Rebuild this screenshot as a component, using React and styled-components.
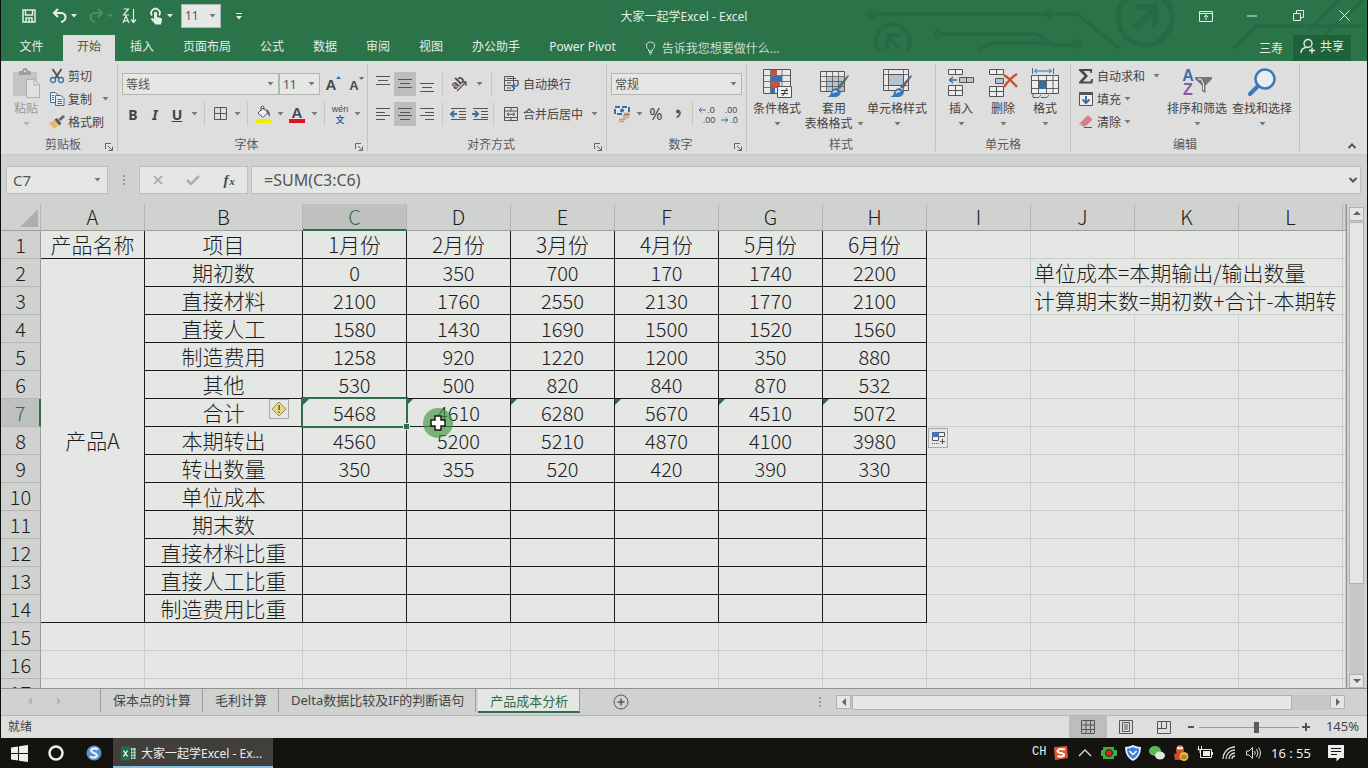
import React from 'react';
import styled, { createGlobalStyle, css } from 'styled-components';

const c = {
  green: '#2b7349',
  greenDark: '#1f6138',
  accent: '#2f6d4c',
  ribbon: '#dedede',
  strip: '#d0d2d0',
  paper: '#e5e7e4',
  line: '#b4b6b4',
  grid: '#cbcdcb',
  ink: '#444',
  blue: '#3f6f9f',
};

const GlobalStyle = createGlobalStyle`
  * { box-sizing: border-box; }
  body { margin: 0; background: #111; }
  body, button, input, select, table {
    font-family: "Noto Sans", "Noto Sans CJK SC", sans-serif;
    font-size: 12px;
    color: ${c.ink};
  }
  button, input, select {
    border: 0; padding: 0; margin: 0; background: none; outline: none; border-radius: 0;
  }
  svg { display: block; flex: none; overflow: visible; }
`;

const Window = styled.div`
  height: 100vh;
  display: flex;
  flex-direction: column;
  overflow: hidden;
`;

const Frame = styled.div`
  flex: 1;
  min-height: 0;
  display: flex;
  flex-direction: column;
  border: solid #0c0c0c;
  border-width: 0 1px;
`;

/* ---------- title bar and ribbon tabs ---------- */

const Header = styled.header`
  position: relative;
  background: ${c.green};
  color: #e3efe6;
`;

const Circuit = styled.svg`
  position: absolute;
  right: 0;
  top: 0;
  overflow: hidden;
`;

const TitleBar = styled.div`
  position: relative;
  display: grid;
  grid-template-columns: 1fr auto 1fr;
  align-items: center;
  height: 31px;
`;

const QuickTools = styled.div`
  display: flex;
  align-items: center;
  padding-left: 16px;
`;

const QuickButton = styled.button`
  width: ${(p) => p.$w || 24}px;
  height: 24px;
  display: flex;
  align-items: center;
  justify-content: center;
  opacity: ${(p) => (p.$dim ? 0.2 : 1)};
`;

const Title = styled.div`
  color: #e3efe6;
`;

const WindowButtons = styled.div`
  display: flex;
  justify-content: flex-end;
`;

const WindowButton = styled.button`
  width: 46px;
  height: 30px;
  display: flex;
  align-items: center;
  justify-content: center;
`;

const TabBar = styled.nav`
  position: relative;
  display: flex;
  align-items: flex-end;
  gap: 1px;
  height: 30px;
`;

const Tab = styled.button`
  height: 26px;
  padding: 0 14px 4px;
  color: ${(p) => (p.$active ? c.accent : '#e3efe6')};
  background: ${(p) => (p.$active ? c.ribbon : 'transparent')};
  ${(p) => p.$file && css`width: 61px;`}
`;

const TellMe = styled.label`
  display: flex;
  align-items: center;
  gap: 6px;
  height: 26px;
  padding: 0 14px;
  input { width: 130px; color: #c9decf; }
  input::placeholder { color: #c9decf; opacity: 1; }
`;

const Account = styled.div`
  margin-left: auto;
  height: 26px;
  display: flex;
  align-items: center;
  gap: 10px;
  padding-right: 16px;
`;

const AccountButton = styled.button`
  color: #e3efe6;
  height: 26px;
`;

const ShareButton = styled.button`
  display: flex;
  align-items: center;
  gap: 4px;
  height: 26px;
  padding: 0 7px 4px;
  color: #e3efe6;
  background: ${c.greenDark};
`;

/* ---------- ribbon ---------- */

const Ribbon = styled.div`
  position: relative;
  display: flex;
  height: 94px;
  padding: 3px 0;
  background: ${c.ribbon};
  border-bottom: 1px solid #c6c8c6;
`;

const Group = styled.section`
  width: ${(p) => p.$w}px;
  display: flex;
  flex-direction: column;
  border-right: 1px solid #c2c4c2;
`;

const GroupBody = styled.div`
  flex: 1;
  min-height: 0;
  display: flex;
  padding-left: ${(p) => p.$pad || 4}px;
`;

const GroupFoot = styled.div`
  display: flex;
  align-items: center;
  height: 15px;
  padding: 0 4px 0 20px;
  color: #5a5a5a;
  span { flex: 1; text-align: center; }
  svg { align-self: flex-end; }
`;

const FootSpacer = styled.i`
  width: 16px;
`;

const Rows = styled.div`
  display: flex;
  flex-direction: column;
  gap: 8px;
  padding-top: 9px;
`;

const Row = styled.div`
  display: flex;
  align-items: center;
  height: 22px;
`;

const Tool = styled.button`
  display: flex;
  align-items: center;
  justify-content: center;
  gap: 4px;
  width: ${(p) => (p.$w ? p.$w + 'px' : '22px')};
  height: ${(p) => (p.$on ? 24 : 22)}px;
  font-size: ${(p) => p.$size || 12}px;
  background: ${(p) => (p.$on ? '#bdbdbd' : 'transparent')};
`;

const WideTool = styled(Tool)`
  width: auto;
  padding: 0 0 0 7px;
  white-space: nowrap;
`;

const Divider = styled.i`
  width: 1px;
  height: 24px;
  margin: 0 ${(p) => p.$m || 4}px;
  background: #c6c8c6;
`;

const Drop = styled.span`
  position: relative;
  display: flex;
  align-items: center;
  width: ${(p) => p.$w}px;
  height: ${(p) => p.$h || 22}px;
  margin-left: ${(p) => p.$ml || 0}px;
  background: ${c.paper};
  border: 1px solid ${c.line};
  select {
    appearance: none;
    width: 100%;
    height: 100%;
    padding-left: 3px;
    font-size: 12px;
    color: #555;
  }
  svg { position: absolute; right: 4px; pointer-events: none; }
`;

const BigTool = styled.button`
  display: flex;
  flex-direction: column;
  align-items: center;
  flex: none;
  width: ${(p) => p.$w}px;
  padding-top: 4px;
  opacity: ${(p) => (p.$dim ? 0.45 : 1)};
  line-height: 16px;
  white-space: nowrap;
  > svg:first-child { margin-bottom: 3px; }
`;

const CaretLine = styled.span`
  display: flex;
  align-items: center;
  justify-content: center;
  gap: 4px;
  height: 14px;
`;

const SmallStack = styled.div`
  display: flex;
  flex-direction: column;
  flex: none;
  width: ${(p) => p.$w}px;
`;

const SmallTool = styled.button`
  display: flex;
  align-items: center;
  gap: 3px;
  height: 23px;
  white-space: nowrap;
`;

const CaretGap = styled.i`
  width: 4px;
`;

const Collapse = styled.button`
  margin: auto 10px 0 auto;
  height: 10px;
`;

/* ---------- formula bar ---------- */

const FormulaBar = styled.div`
  display: flex;
  align-items: center;
  height: 49px;
  padding: 0 6px 0 5px;
  background: ${c.strip};
`;

const Box = styled.div`
  display: flex;
  align-items: center;
  height: 28px;
  background: ${c.paper};
  border: 1px solid #bdbfbd;
  padding-right: ${(p) => (p.$w ? 6 : 2)}px;
  width: ${(p) => (p.$w ? p.$w + 'px' : 'auto')};
  flex: ${(p) => (p.$w ? 'none' : '1')};
  margin-right: ${(p) => p.$mr || 0}px;
  input {
    flex: 1;
    min-width: 0;
    padding-left: ${(p) => (p.$w ? 6 : 12)}px;
    font-size: ${(p) => (p.$w ? 15 : 16)}px;
    color: #555;
  }
`;

const Dots = styled.span`
  width: 31px;
  display: flex;
  justify-content: center;
`;

const FxButtons = styled(Box)`
  justify-content: space-around;
  padding: 0;
`;

/* ---------- sheet ---------- */

const Workspace = styled.main`
  flex: 1;
  min-height: 0;
  display: flex;
  background: ${c.strip};
`;

const SheetPane = styled.div`
  flex: 1;
  min-width: 0;
  overflow: hidden;
  border-right: 1px solid #8f918f;
`;

const Sheet = styled.table`
  width: 100%;
  table-layout: fixed;
  border-collapse: separate;
  border-spacing: 0;
  font-family: "Noto Sans CJK SC", sans-serif;
  font-weight: 300;
  font-size: 20px;
  color: #1c1c1c;
  line-height: 27px;
`;

const ColHead = styled.th`
  height: 27px;
  line-height: ${(p) => (p.$on ? 25 : 26)}px;
  padding: 0;
  font-weight: 300;
  background: ${(p) => (p.$on ? '#bfc1bf' : c.strip)};
  color: ${(p) => (p.$on ? c.accent : '#1c1c1c')};
  border-right: 1px solid #b4b6b4;
  border-bottom: ${(p) => (p.$on ? '2px solid ' + c.accent : '1px solid #9c9e9c')};
`;

const Corner = styled(ColHead)`
  svg { margin: 2px 2px 0 auto; }
`;

const RowHead = styled.th`
  height: 28px;
  padding: 0;
  font-weight: 300;
  background: ${(p) => (p.$on ? '#bfc1bf' : c.strip)};
  color: ${(p) => (p.$on ? c.accent : '#1c1c1c')};
  border-right: ${(p) => (p.$on ? '2px solid ' + c.accent : '1px solid #9c9e9c')};
  border-bottom: 1px solid #b4b6b4;
`;

const Cell = styled.td`
  position: relative;
  height: 28px;
  padding: 0;
  text-align: center;
  white-space: nowrap;
  background: ${c.paper};
  border-right: 1px solid ${(p) => (p.$box ? '#1a1a1a' : c.grid)};
  border-bottom: 1px solid ${(p) => (p.$box ? '#1a1a1a' : c.grid)};
  ${(p) => p.$cjk && css`font-size: 21px;`}
  ${(p) => p.$note && css`text-align: left; padding-left: 3px;`}
`;

const ErrorMark = styled.i`
  position: absolute;
  left: 0;
  top: 0;
  border: 3px solid transparent;
  border-top-color: ${c.accent};
  border-left-color: ${c.accent};
`;

const Selection = styled.i`
  position: absolute;
  inset: -2px;
  border: 2px solid ${c.accent};
  z-index: 1;
  &::after {
    content: '';
    position: absolute;
    right: -3px;
    bottom: -3px;
    width: 5px;
    height: 5px;
    background: ${c.accent};
    box-shadow: 0 0 0 1px ${c.paper};
  }
`;

const Tag = styled.button`
  position: absolute;
  top: ${(p) => p.$top || 0}px;
  left: ${(p) => p.$left}px;
  width: 20px;
  height: 20px;
  display: flex;
  align-items: center;
  justify-content: center;
  background: ${c.paper};
  border: 1px solid #a8aaa8;
  z-index: 2;
`;

const Pointer = styled.svg`
  position: absolute;
  left: 16px;
  top: 9px;
  z-index: 2;
`;

const VScroll = styled.div`
  width: 20px;
  padding: 3px 1px 0 2px;
  display: flex;
  flex-direction: column;
`;

const ScrollButton = styled.button`
  width: 15px;
  height: 14px;
  flex: none;
  display: flex;
  align-items: center;
  justify-content: center;
  background: ${c.paper};
  border: 1px solid #b0b2b0;
`;

const Thumb = styled.div`
  background: ${c.paper};
  border: 1px solid #b0b2b0;
`;

const VTrack = styled.div`
  flex: 1;
  width: 15px;
  padding-top: 1px;
  background: #c6c8c6;
  ${Thumb} { height: 80%; }
`;

/* ---------- sheet tabs ---------- */

const SheetBar = styled.div`
  display: flex;
  height: 28px;
  background: ${c.strip};
  border-top: 1px solid #8f918f;
  border-bottom: 1px solid #b4b6b4;
`;

const SheetNav = styled.div`
  display: flex;
  width: 100px;
  padding: 0 37px 0 25px;
  justify-content: space-between;
  align-items: center;
  border-right: 1px solid #9c9e9c;
  height: 23px;
`;

const SheetTab = styled.button`
  height: 23px;
  padding: 0 11px 2px 12px;
  font-size: 13px;
  border-right: 1px solid #9c9e9c;
  ${(p) => p.$active && css`
    height: 24px;
    padding-bottom: 0;
    margin-left: 2px;
    color: ${c.accent};
    background: ${c.paper};
    border-bottom: 2px solid ${c.accent};
  `}
`;

const AddSheet = styled.button`
  margin-left: 33px;
  height: 26px;
`;

const HScroll = styled.div`
  margin: 0 22px 0 auto;
  width: 526px;
  display: flex;
  align-items: center;
`;

const HTrack = styled.div`
  flex: 1;
  height: 15px;
  padding-left: 1px;
  background: #c6c8c6;
  ${Thumb} { width: 92%; height: 15px; }
`;

const HGap = styled.i`
  width: 17px;
`;

/* ---------- status bar ---------- */

const StatusBar = styled.footer`
  display: flex;
  align-items: center;
  height: 22px;
  padding-left: 7px;
  background: ${c.ribbon};
`;

const StatusText = styled.span`
  padding-bottom: 2px;
`;

const ViewButton = styled.button`
  width: 38px;
  height: 22px;
  display: flex;
  align-items: center;
  justify-content: center;
  background: ${(p) => (p.$on ? '#bdbdbd' : 'transparent')};
`;

const StatusRight = styled.div`
  margin-left: auto;
  display: flex;
  align-items: center;
  padding-right: 8px;
`;

const ZoomSlider = styled.input.attrs({ type: 'range' })`
  appearance: none;
  width: 100px;
  height: 14px;
  margin: 0 2px 0 0;
  background: linear-gradient(#999, #999) center / 100% 1px no-repeat;
  &::-webkit-slider-thumb {
    appearance: none;
    width: 5px;
    height: 11px;
    background: #5a5a5a;
  }
`;

const ZoomValue = styled.span`
  width: 48px;
  padding-bottom: 2px;
  text-align: right;
  font-size: 13px;
`;

/* ---------- taskbar ---------- */

const Taskbar = styled.div`
  display: flex;
  align-items: center;
  height: 30px;
  background: #14130f;
  color: #eee;
`;

const TaskIcon = styled.button`
  width: ${(p) => p.$w || 38}px;
  height: 30px;
  display: flex;
  align-items: center;
  justify-content: center;
`;

const TaskButton = styled.button`
  display: flex;
  align-items: center;
  gap: 5px;
  width: 160px;
  height: 30px;
  padding: 2px 8px 0;
  color: #eee;
  background: #403f3c;
  border-bottom: 2px solid #86c0dc;
  white-space: nowrap;
`;

const Tray = styled.div`
  margin-left: auto;
  display: flex;
  align-items: center;
  padding-right: 20px;
`;

const TrayItem = styled(TaskIcon)`
  width: 24px;
`;

const Ime = styled.span`
  width: 17px;
  margin-bottom: 3px;
  font-family: "Liberation Mono", monospace;
`;

const Clock = styled.time`
  width: 52px;
  text-align: center;
  font-size: 13px;
  margin-right: 7px;
`;

/* ---------- icons ---------- */

const Svg = ({ w = 16, h, children, ...rest }) => (
  <svg width={w} height={h || w} viewBox={`0 0 ${w} ${h || w}`} fill="none" stroke="#555" {...rest}>
    {children}
  </svg>
);

const Caret = ({ color = '#777' }) => (
  <Svg w={7} h={4} stroke="none"><path d="M.5 0h6L3.500 3.500z" fill={color} /></Svg>
);

const LightCaret = () => (
  <Svg w={10} h={4} stroke="none"><path d="M3 0h6L6 3.500z" fill="#e3efe6" /></Svg>
);

const Chevron = ({ up, color = '#555' }) => (
  <Svg w={10} h={6} stroke={color} strokeWidth="2"><path d={up ? 'M1.500 5L5 1.500 8.500 5' : 'M1.500 1L5 4.500 8.500 1'} /></Svg>
);

const Arrow = ({ dir, color = '#666' }) => {
  const d = { up: 'M0 5L4 1l4 4z', down: 'M0 2l4 4 4-4z', left: 'M6 0v8L2 4z', right: 'M2 0v8l4-4z' }[dir];
  return <Svg w={8} stroke="none"><path d={d} fill={color} /></Svg>;
};

const Launcher = () => (
  <Svg w={8} stroke="#666"><path d="M.5 6V.5H6M3 3l4 4M7.500 3.500v4h-4" /></Svg>
);

const Separator = () => (
  <Svg w={2} h={10} stroke="#999" strokeDasharray="2 2"><path d="M1 0v10" strokeWidth="2" /></Svg>
);

const SaveIcon = () => (
  <Svg stroke="#e3efe6" strokeWidth="1.500"><path d="M2 2h12v12H2zM4.500 2v5h7V2M5 14v-4h6v4M8 11v3" /></Svg>
);
const UndoIcon = ({ flip }) => (
  <Svg stroke="#e3efe6" strokeWidth="2.200">
    <g transform={flip ? 'translate(16 0) scale(-1 1)' : undefined}>
      <path d="M6 1L2 5l4 4M2.500 5H9c3 0 4.500 2 4.500 4S12 13.500 9 14" />
    </g>
  </Svg>
);
const SortIcon = () => (
  <Svg stroke="#e3efe6" strokeWidth="1.200">
    <path d="M2.500 1h5l-5 6h5.500M2 15l3-7 3 7M3 12.800h4M12.500 1v13M10 11.500l2.500 3 2.500-3" />
  </Svg>
);
const TouchIcon = () => (
  <Svg stroke="none">
    <path d="M4 7.500a4.300 4.300 0 1 1 7 0" stroke="#e3efe6" strokeWidth="1.800" />
    <path d="M6 4.500q1.500-1.500 3 0V9l4 1q1.300.5 1 2l-1 4.500H7.500L3 11.500q-.3-1.500 1.200-1.500l1.800 1z" fill="#e3efe6" />
  </Svg>
);
const BulbIcon = () => (
  <Svg w={11} h={14} stroke="#d2e4d7"><path d="M3.500 10V8.500C.5 6.500.5 1 5.500 1s5 5.500 2 7.500V10zM4 11.500h3M4.500 13h2" /></Svg>
);
const PersonIcon = () => (
  <Svg stroke="#e3efe6" strokeWidth="1.400"><circle cx="8" cy="5.500" r="4" /><path d="M1 15c0-3 2-5 5-5.500M12 9.500v6M9 12.500h6" /></Svg>
);

const PasteIcon = () => (
  <Svg w={30} stroke="none">
    <path d="M2 4h24v24H2z" fill="#a5a5a5" />
    <path d="M8 7V3h3q0-3 3-3t3 3h3v4zM13 2.500h2v1.500h-2z" fill="#555" fillRule="evenodd" />
    <path d="M15.500 11.500h8l5 5v13h-13z" fill="#e6e6e6" stroke="#777" />
    <path d="M23 12v5h5" stroke="#777" />
  </Svg>
);
const CutIcon = () => (
  <Svg><path d="M3.500 1l6.500 9.500M12.500 1L6 10.500" strokeWidth="2" /><circle cx="4" cy="12" r="2.500" stroke={c.blue} strokeWidth="1.300" /><circle cx="12" cy="12" r="2.500" stroke={c.blue} strokeWidth="1.300" /></Svg>
);
const CopyIcon = () => (
  <Svg stroke={c.blue}>
    <path d="M6.500 11.500h-5v-10h5l3 3" fill="#e8edf0" />
    <path d="M6.500 4.500h5.500l3 3v7H6.500z" fill="#e8edf0" />
    <path d="M3 4.500h2M3 6.500h2M3 8.500h2M8.500 8.500h4.500M8.500 10.500h4.500M8.500 12.500h4.500" />
  </Svg>
);
const BrushIcon = () => (
  <Svg stroke="none">
    <path d="M0 9l6-3 4 5-5 4z" fill="#e0b878" />
    <path d="M5.500 5.500l2.500-1.500 4.500 5.500-2 2z" fill="#555" /><path d="M9.500 5L14 1l2 2-4.500 4z" fill="#666" />
  </Svg>
);

const Letter = ({ children, size = 15, color = '#4a4a4a', x = 8, y = 13, ...rest }) => (
  <text x={x} y={y} fontSize={size} fill={color} stroke="none" textAnchor="middle" fontWeight="600" fontFamily="Liberation Sans, Noto Sans CJK SC, sans-serif" {...rest}>{children}</text>
);
const GrowIcon = ({ down }) => (
  <Svg w={18} h={20}><Letter x={7} y={16} size={down ? 13 : 15}>A</Letter><path d={down ? 'M12 3h5l-2.500 3z' : 'M12 5h5l-2.500-3z'} fill={c.blue} stroke="none" /></Svg>
);
const BorderIcon = () => <Svg><path d="M2.500 1.500h12v12h-12zM8.500 1.500v12M2.500 7.500h12" /></Svg>;
const FillIcon = () => (
  <Svg w={18}>
    <path d="M4 8l5-5 5 4.500-5 5z" fill="#eee" /><path d="M7 6V2q1.500-2 3 0v3" />
    <path d="M12 4q4.500 1.500 4 8l-3-4z" fill={c.blue} stroke="none" /><path d="M1 14h16v4H1z" fill="#eeee00" stroke="none" />
  </Svg>
);
const FontColorIcon = () => (
  <Svg w={18}><Letter x={9} y={13} size={15}>A</Letter><path d="M1 14h16v4H1z" fill="#e0141c" stroke="none" /></Svg>
);
const PhoneticIcon = () => (
  <Svg w={20} h={22}><Letter x={10} y={9} size={9} fontWeight="400">wén</Letter><Letter x={10} y={20} size={9} color="#2d66a8">文</Letter></Svg>
);

const Lines = ({ rows }) => (
  <Svg>{rows.map(([x1, x2, y]) => <path key={y} d={`M${x1} ${y}H${x2}`} />)}</Svg>
);
const vAlign = (y) => [[1, 15, y], [3, 13, y + 4], [1, 15, y + 8]];
const hAlign = {
  left: [[1, 15, 2.5], [1, 10, 6.5], [1, 15, 9.5], [1, 10, 13.5]],
  center: [[1, 15, 2.5], [3, 13, 6.5], [1, 15, 9.5], [3, 13, 13.5]],
  right: [[1, 15, 2.5], [6, 15, 6.5], [1, 15, 9.5], [6, 15, 13.5]],
};
const OrientIcon = () => (
  <Svg w={18}>
    <Letter x={8} y={11} size={12} transform="rotate(-45 8 8)">ab</Letter>
    <path d="M7 16l9-9M12 7h4v4" strokeWidth="1.300" />
  </Svg>
);
const IndentIcon = ({ right }) => (
  <Svg w={18}>
    <path d="M2 3.500h15M10 6.500h7M10 9.500h7M10 12.500h7M2 14.500h15" />
    <g transform={right ? 'translate(9 0) scale(-1 1)' : undefined} stroke={c.blue} strokeWidth="2"><path d="M8 9H2M5 6L2 9l3 3" /></g>
  </Svg>
);
const WrapIcon = () => (
  <Svg>
    <path d="M1.500.5h9v14h-9zM1.500 4.500h14M1.500 9.500h9M4 2.500h9M4 7h4M4 12h4" />
    <path d="M15 4.500v4q0 2-5 2M12 8L9.500 10.500 12 13" stroke={c.blue} strokeWidth="1.500" />
  </Svg>
);
const MergeIcon = () => (
  <Svg><path d="M1.500 1.500h13v13h-13zM1.500 5h13M1.500 11.500h13M8 1.500V5M8 11.500v3M4 8.300h8M6 6.500L4 8.300l2 1.700M10 6.500l2 1.800-2 1.700" /></Svg>
);
const CurrencyIcon = () => (
  <Svg w={18}>
    <path d="M2 2h14v7H2z" fill="#dfe7ee" stroke={c.blue} strokeWidth="2" strokeDasharray="5 2" /><circle cx="9" cy="5.500" r="2" fill={c.blue} stroke="none" />
    <path d="M11 8.500h6M10 10.500h7M10 12.500h6M6 14.500h7M6 16.500h5" stroke="#e0985a" strokeWidth="1.300" />
  </Svg>
);
const CommaIcon = () => (
  <Svg w={6} h={10} stroke="none"><circle cx="3" cy="2.500" r="2" fill="#555" /><path d="M5 2.500q.5 4-3.500 6" stroke="#555" strokeWidth="1.500" /></Svg>
);
const DecimalIcon = ({ less }) => (
  <Svg w={20} h={20}>
    <Letter x={less ? 12 : 14} y={9} size={9} fontWeight="400">{less ? '.00' : '.0'}</Letter>
    <Letter x={less ? 15 : 12} y={19} size={9} fontWeight="400">{less ? '.0' : '.00'}</Letter>
    <path d={less ? 'M2 16h7M6.500 13.500L9 16l-2.500 2.500' : 'M9 6H2M4.500 3.500L2 6l2.500 2.500'} stroke={c.blue} />
  </Svg>
);

const CondIcon = () => (
  <Svg w={30}>
    <path d="M1.500 1.500h27v24h-27z" fill="#e8e8e8" />
    <path d="M8.500 1.500v24M20 1.500v24M1.500 7.500h27M1.500 13.500h27M1.500 19.500h27" strokeWidth=".8" />
    <path d="M9 2h6v5H9zM9 14h9v5H9z" fill="#c95240" stroke="none" /><path d="M9 8h11v5H9zM9 20h4v5H9z" fill="#3b6faf" stroke="none" />
    <path d="M15.500 18.500h14v11h-14z" fill="#eee" />
    <path d="M19 22.500h7M19 25.500h7M25 20l-4.500 8" stroke="#333" />
  </Svg>
);
const BrushOver = () => (
  <>
    <path d="M30 8l-9 13-3-2L29 7z" fill="#666" stroke="none" />
    <path d="M18 20l4 3q0 5-5 6H8q4-1 4-5 2-4 6-4z" fill="#3b78b5" stroke="none" />
    <path d="M14 25q2-3 4-1" stroke="#dfe7ee" strokeWidth="1.500" />
  </>
);
const TableStyleIcon = () => (
  <Svg w={30}>
    <path d="M1.500 3.500h24v20h-24z" fill="#e8e8e8" /><path d="M8 9h17v14H8z" fill="#b4c4d2" stroke="none" />
    <path d="M7.500 3.500v20M13.500 3.500v20M19.500 3.500v20M1.500 8.500h24M1.500 13.500h24M1.500 18.500h24" strokeWidth=".8" />
    <BrushOver />
  </Svg>
);
const CellStyleIcon = () => (
  <Svg w={30}>
    <path d="M1.500 1.500h25v21h-25z" fill="#e8e8e8" /><path d="M6.500 6.500h15v11h-15z" fill="#b4c4d2" />
    <path d="M6.500 1.500v21M21.500 1.500v21M1.500 6.500h25M1.500 17.500h25" strokeWidth=".8" />
    <BrushOver />
  </Svg>
);
const InsertIcon = () => (
  <Svg w={30}>
    <path d="M2.500 1.500h14v5h-14zM9.500 1.500v5M2.500 17.500h14v10h-14zM9.500 17.500v10M2.500 22.500h14" fill="#eee" />
    <path d="M13.500 9.500h14v5h-14zM20.500 9.500v5" fill="#b4c4d2" />
    <path d="M11 12H4M7 9l-3.500 3L7 15" stroke={c.blue} strokeWidth="1.500" />
  </Svg>
);
const DeleteIcon = () => (
  <Svg w={30}>
    <path d="M1.500 1.500h14v5h-14zM8.500 1.500v5M1.500 18.500h14v10h-14zM8.500 18.500v10M1.500 23.500h14" fill="#eee" />
    <path d="M7.500 10.500h8v5h-8z" fill="#b4c4d2" />
    <path d="M16 7q6 4 13 12M29 6q-7 4-13 13" stroke="#cc5038" strokeWidth="2.500" />
  </Svg>
);
const FormatIcon = () => (
  <Svg w={30}>
    <path d="M2.500 0v6M23.500 0v6M4.500 3h17M7 .8L4.500 3 7 5.200M19 .8L21.500 3 19 5.200" stroke={c.blue} />
    <path d="M1.500 7.500h27v18h-27z" fill="#eee" />
    <path d="M8.500 7.500v18M16.500 7.500v18M23 7.500v18M1.500 12.500h27M1.500 20.500h27M3 26v3.500h6l2-2.500M11 29.500h6l2-2.500" strokeWidth=".9" />
    <path d="M9 13h7v8H9z" fill="#2f6fa8" stroke="none" />
  </Svg>
);
const SigmaIcon = () => <Svg stroke="none"><path d="M1 1h13v4h-1.500L12 3H5.500l4.500 5-5 5.500h7.500l.8-2.500H15l-.5 4.500H1V14l5.500-6L1 2.500z" fill="#4a4a4a" /></Svg>;
const FillDownIcon = () => (
  <Svg><path d="M1.500 1.500h13v13h-13z" fill="#eee" /><path d="M1.500 2.500h13" strokeWidth="3" /><path d="M8 5v7M4.500 8.500L8 12l3.500-3.500" stroke={c.blue} strokeWidth="2" /></Svg>
);
const EraserIcon = () => (
  <Svg stroke="none"><path d="M2 9l7-7q1-1 2 0l2.500 2.500q1 1 0 2L8 12H5z" fill="#dc7c88" /><path d="M2 9l4 3.500H5L1.500 10z" fill="#f2dcdc" stroke="#999" strokeWidth=".6" /><path d="M6 13.500h8" stroke="#555" /></Svg>
);
const SortFilterIcon = () => (
  <Svg w={30}>
    <Letter x={6} y={13} size={16} color="#3b6faf">A</Letter><Letter x={6} y={27} size={16} color="#8757a8">Z</Letter>
    <path d="M13 9h17v2l-6.500 6.500V25l-3.500-2v-5.500L13 11z" fill="#777" stroke="none" /><path d="M16 11h3l2.500 5v6" stroke="#eee" />
  </Svg>
);
const SearchIcon = () => (
  <Svg w={30}><circle cx="18" cy="11" r="9.500" fill="#e9eef2" stroke="#3b78b5" strokeWidth="2.500" /><path d="M11 18l-8 8" stroke="#3b78b5" strokeWidth="4" strokeLinecap="round" /></Svg>
);

/* ---------- data ---------- */

const tabs = ['开始', '插入', '页面布局', '公式', '数据', '审阅', '视图', '办公助手', 'Power Pivot'];
const columns = ['A', 'B', 'C', 'D', 'E', 'F', 'G', 'H', 'I', 'J', 'K', 'L'];
const table = [
  ['项目', '1月份', '2月份', '3月份', '4月份', '5月份', '6月份'],
  ['期初数', 0, 350, 700, 170, 1740, 2200],
  ['直接材料', 2100, 1760, 2550, 2130, 1770, 2100],
  ['直接人工', 1580, 1430, 1690, 1500, 1520, 1560],
  ['制造费用', 1258, 920, 1220, 1200, 350, 880],
  ['其他', 530, 500, 820, 840, 870, 532],
  ['合计', 5468, 4610, 6280, 5670, 4510, 5072],
  ['本期转出', 4560, 5200, 5210, 4870, 4100, 3980],
  ['转出数量', 350, 355, 520, 420, 390, 330],
  ['单位成本'],
  ['期末数'],
  ['直接材料比重'],
  ['直接人工比重'],
  ['制造费用比重'],
];
const notes = { 2: '单位成本=本期输出/输出数量', 3: '计算期末数=期初数+合计-本期转' };

function SheetRow({ n }) {
  const data = table[n - 1];
  return (
    <tr>
      <RowHead scope="row" $on={n === 7}>{n}</RowHead>
      {n === 1 && <Cell $box $cjk>产品名称</Cell>}
      {n === 2 && <Cell $box $cjk rowSpan={13}>产品A</Cell>}
      {!data && <Cell />}
      {[0, 1, 2, 3, 4, 5, 6].map((i) => (
        <Cell key={i} $box={!!data} $cjk={i === 0 || n === 1}>
          {data ? data[i] : null}
          {n === 7 && i > 0 && <ErrorMark />}
          {n === 7 && i === 0 && (
            <Tag $left={124} aria-label="错误检查">
              <Svg stroke="none"><path d="M8 1l7 7-7 7-7-7z" fill="#ecd87a" stroke="#9a8d55" /><path d="M7.300 4h1.500v5H7.300zM7.300 10.500h1.500V12H7.300z" fill="#555" /></Svg>
            </Tag>
          )}
          {n === 7 && i === 1 && <Selection />}
          {n === 7 && i === 2 && (
            <Pointer width="30" height="30" viewBox="0 0 30 30">
              <circle cx="15" cy="15" r="15" fill="#3f9640" opacity=".65" />
              <path d="M12 8h6v4h4v6h-4v4h-6v-4H8v-6h4z" fill="#fff" stroke="#1a1a1a" strokeWidth="1.500" />
            </Pointer>
          )}
        </Cell>
      ))}
      <Cell>
        {n === 8 && (
          <Tag $left={1} $top={1} aria-label="自动填充选项">
            <Svg w={14}><path d="M1.500 1.500h12v4h-12zM1.500 5.500h6v4h-6z" fill="#f2f2f2" /><path d="M1 1h7v5H1z" fill="#4a6fb5" stroke="none" /><path d="M1 12.500h7" strokeDasharray="1 1" /><path d="M11.500 8v5M9 10.500h5" /></Svg>
          </Tag>
        )}
      </Cell>
      {notes[n] ? <Cell $note $cjk colSpan={3}>{notes[n]}</Cell> : <><Cell /><Cell /><Cell /></>}
      <Cell />
    </tr>
  );
}

/* ---------- sections ---------- */

function AppHeader() {
  return (
    <Header>
      <Circuit width="528" height="61" viewBox="0 0 528 61" fill="none" stroke="#276a43" strokeWidth="3">
        <path d="M34 14h204l42 34M100 34h98l16 11h26M140 50l12-7h58M395 48l22-22h110M470 30L500 0M484 36l40-36" />
        <circle cx="33" cy="14" r="3" /><circle cx="99" cy="34" r="3" /><circle cx="210" cy="14" r="3" /><circle cx="238" cy="44" r="3" />
        <circle cx="306" cy="18" r="27" strokeWidth="5" /><path d="M296 28l20-20M296 7h20v20" strokeWidth="6" />
        <path d="M40 51a17 17 0 1 1 28 0M60 48L48 36M48 50V35h14" strokeWidth="4" />
      </Circuit>
      <TitleBar>
        <QuickTools>
          <QuickButton aria-label="保存"><SaveIcon /></QuickButton>
          <QuickButton $w={48} aria-label="撤消"><UndoIcon /><LightCaret /></QuickButton>
          <QuickButton $w={24} $dim aria-label="恢复"><UndoIcon flip /><LightCaret /></QuickButton>
          <QuickButton $w={32} aria-label="降序"><SortIcon /></QuickButton>
          <QuickButton $w={32} aria-label="触摸模式"><TouchIcon /><LightCaret /></QuickButton>
          <Drop $w={40} $h={24} $ml={4}>
            <select aria-label="快速字号" defaultValue="11"><option>11</option></select>
            <Caret />
          </Drop>
          <QuickButton $w={36} aria-label="自定义快速访问工具栏">
            <Svg w={8} h={8} stroke="#e3efe6"><path d="M1 1.500h6" /><path d="M1 4h6L4 7.500z" fill="#e3efe6" stroke="none" /></Svg>
          </QuickButton>
        </QuickTools>
        <Title>大家一起学Excel - Excel</Title>
        <WindowButtons>
          <WindowButton aria-label="功能区显示选项"><Svg w={14} h={12} stroke="#e3efe6"><path d="M.5 1.500h13v10H.5zM.5 3.500h13M7 10V5M5 7l2-2 2 2" /></Svg></WindowButton>
          <WindowButton aria-label="最小化"><Svg w={10} h={2} stroke="#e3efe6"><path d="M0 1h10" /></Svg></WindowButton>
          <WindowButton aria-label="还原"><Svg w={11} stroke="#e3efe6"><path d="M.5 3.500h7v7h-7zM3.500 3V.5h7v7H8" /></Svg></WindowButton>
          <WindowButton aria-label="关闭"><Svg w={11} stroke="#e3efe6"><path d="M.5.5l10 10M10.500.5l-10 10" /></Svg></WindowButton>
        </WindowButtons>
      </TitleBar>
      <TabBar>
        <Tab $file>文件</Tab>
        {tabs.map((t, i) => <Tab key={t} $active={i === 0}>{t}</Tab>)}
        <TellMe><BulbIcon /><input aria-label="告诉我" placeholder="告诉我您想要做什么..." /></TellMe>
        <Account>
          <AccountButton>三寿</AccountButton>
          <ShareButton><PersonIcon />共享</ShareButton>
        </Account>
      </TabBar>
    </Header>
  );
}

const Foot = ({ children, launcher = true }) => (
  <GroupFoot><span>{children}</span>{launcher ? <Launcher /> : <FootSpacer />}</GroupFoot>
);

const Big = ({ icon, label, second, w, dim }) => (
  <BigTool $w={w} $dim={dim}>{icon}{label}<CaretLine>{second}<Caret /></CaretLine></BigTool>
);

function RibbonBar() {
  return (
    <Ribbon>
      <Group $w={117}>
        <GroupBody $pad={2}>
          <Big icon={<PasteIcon />} label="粘贴" w={46} dim />
          <SmallStack $w={64}>
            <SmallTool><CutIcon />剪切</SmallTool>
            <SmallTool><CopyIcon />复制<CaretGap /><Caret /></SmallTool>
            <SmallTool><BrushIcon />格式刷</SmallTool>
          </SmallStack>
        </GroupBody>
        <Foot>剪贴板</Foot>
      </Group>
      <Group $w={250}>
        <GroupBody>
          <Rows>
            <Row>
              <Drop $w={157}><select aria-label="字体" defaultValue="等线"><option>等线</option></select><Caret /></Drop>
              <Drop $w={41}><select aria-label="字号" defaultValue="11"><option>11</option></select><Caret /></Drop>
              <Tool $w={26} aria-label="增大字号"><GrowIcon /></Tool>
              <Tool $w={20} aria-label="减小字号"><GrowIcon down /></Tool>
            </Row>
            <Row>
              <Tool $size={14}><b>B</b></Tool>
              <Tool $size={14}><b><i>I</i></b></Tool>
              <Tool $size={14}><b><u>U</u></b></Tool>
              <Tool $w={12} aria-label="下划线选项"><Caret /></Tool>
              <Divider />
              <Tool aria-label="边框"><BorderIcon /></Tool>
              <Tool $w={12} aria-label="边框选项"><Caret /></Tool>
              <Divider />
              <Tool aria-label="填充颜色"><FillIcon /></Tool>
              <Tool $w={12} aria-label="填充颜色选项"><Caret /></Tool>
              <Tool aria-label="字体颜色"><FontColorIcon /></Tool>
              <Tool $w={12} aria-label="字体颜色选项"><Caret /></Tool>
              <Divider />
              <Tool aria-label="拼音"><PhoneticIcon /></Tool>
              <Tool $w={12} aria-label="拼音选项"><Caret /></Tool>
            </Row>
          </Rows>
        </GroupBody>
        <Foot>字体</Foot>
      </Group>
      <Group $w={239}>
        <GroupBody>
          <Rows>
            <Row>
              <Tool aria-label="顶端对齐"><Lines rows={vAlign(0.5)} /></Tool>
              <Tool $on aria-label="垂直居中"><Lines rows={vAlign(3.5)} /></Tool>
              <Tool aria-label="底端对齐"><Lines rows={vAlign(7.5)} /></Tool>
              <Divider />
              <Tool $w={24} aria-label="方向"><OrientIcon /></Tool>
              <Tool $w={16} aria-label="方向选项"><Caret /></Tool>
              <Divider />
              <WideTool><WrapIcon />自动换行</WideTool>
            </Row>
            <Row>
              <Tool aria-label="左对齐"><Lines rows={hAlign.left} /></Tool>
              <Tool $on aria-label="居中"><Lines rows={hAlign.center} /></Tool>
              <Tool aria-label="右对齐"><Lines rows={hAlign.right} /></Tool>
              <Divider />
              <Tool aria-label="减少缩进量"><IndentIcon /></Tool>
              <Tool aria-label="增加缩进量"><IndentIcon right /></Tool>
              <Divider $m={2} />
              <WideTool><MergeIcon />合并后居中</WideTool>
              <Tool aria-label="合并选项"><Caret /></Tool>
            </Row>
          </Rows>
        </GroupBody>
        <Foot>对齐方式</Foot>
      </Group>
      <Group $w={140}>
        <GroupBody>
          <Rows>
            <Row><Drop $w={131}><select aria-label="数字格式" defaultValue="常规"><option>常规</option></select><Caret /></Drop></Row>
            <Row>
              <Tool aria-label="会计数字格式"><CurrencyIcon /></Tool>
              <Tool $w={12} aria-label="会计格式选项"><Caret /></Tool>
              <Tool $size={16}>%</Tool>
              <Tool aria-label="千位分隔样式"><CommaIcon /></Tool>
              <Divider $m={3} />
              <Tool aria-label="增加小数位数"><DecimalIcon /></Tool>
              <Tool aria-label="减少小数位数"><DecimalIcon less /></Tool>
            </Row>
          </Rows>
        </GroupBody>
        <Foot>数字</Foot>
      </Group>
      <Group $w={189}>
        <GroupBody $pad={3}>
          <Big icon={<CondIcon />} label="条件格式" w={54} />
          <Big icon={<TableStyleIcon />} label="套用" second="表格格式" w={60} />
          <Big icon={<CellStyleIcon />} label="单元格样式" w={66} />
        </GroupBody>
        <Foot launcher={false}>样式</Foot>
      </Group>
      <Group $w={135}>
        <GroupBody>
          <Big icon={<InsertIcon />} label="插入" w={42} />
          <Big icon={<DeleteIcon />} label="删除" w={42} />
          <Big icon={<FormatIcon />} label="格式" w={42} />
        </GroupBody>
        <Foot launcher={false}>单元格</Foot>
      </Group>
      <Group $w={229}>
        <GroupBody $pad={7}>
          <SmallStack $w={82}>
            <SmallTool><SigmaIcon />自动求和<CaretGap /><Caret /></SmallTool>
            <SmallTool><FillDownIcon />填充<Caret /></SmallTool>
            <SmallTool><EraserIcon />清除<Caret /></SmallTool>
          </SmallStack>
          <Big icon={<SortFilterIcon />} label="排序和筛选" w={74} />
          <Big icon={<SearchIcon />} label="查找和选择" w={56} />
        </GroupBody>
        <Foot launcher={false}>编辑</Foot>
      </Group>
      <Collapse aria-label="折叠功能区"><Chevron up /></Collapse>
    </Ribbon>
  );
}

function Formula() {
  return (
    <FormulaBar>
      <Box $w={102}><input aria-label="名称框" defaultValue="C7" /><Caret /></Box>
      <Dots><Separator /></Dots>
      <FxButtons $w={109} $mr={3}>
        <Tool aria-label="取消"><Svg w={10} stroke="#b0b0b0" strokeWidth="2"><path d="M1 1l8 8M9 1L1 9" /></Svg></Tool>
        <Tool aria-label="输入"><Svg w={14} h={10} stroke="#b0b0b0" strokeWidth="2.500"><path d="M1 5l4 4 8-8" /></Svg></Tool>
        <Tool aria-label="插入函数"><Svg w={18} h={20}><Letter x={6} y={15} size={15} fontFamily="Liberation Serif, serif" fontStyle="italic">f</Letter><Letter x={12} y={15} size={11} fontFamily="Liberation Serif, serif" fontStyle="italic">x</Letter></Svg></Tool>
      </FxButtons>
      <Box><input aria-label="编辑栏" defaultValue="=SUM(C3:C6)" /><Chevron /></Box>
    </FormulaBar>
  );
}

export default function App() {
  return (
    <Window>
      <GlobalStyle />
      <Frame>
        <AppHeader />
        <RibbonBar />
        <Formula />
        <Workspace>
          <SheetPane>
            <Sheet>
              <colgroup>
                <col width="40" />
                {columns.map((l) => <col key={l} width={l === 'B' ? 158 : 104} />)}
                <col />
              </colgroup>
              <thead>
                <tr>
                  <Corner><Svg w={18} stroke="none"><path d="M18 0v18H0z" fill="#adafad" /></Svg></Corner>
                  {columns.map((l) => <ColHead key={l} scope="col" $on={l === 'C'}>{l}</ColHead>)}
                  <ColHead />
                </tr>
              </thead>
              <tbody>
                {Array.from({ length: 17 }, (_, i) => <SheetRow key={i} n={i + 1} />)}
              </tbody>
            </Sheet>
          </SheetPane>
          <VScroll>
            <ScrollButton aria-label="向上滚动"><Arrow dir="up" /></ScrollButton>
            <VTrack><Thumb /></VTrack>
            <ScrollButton aria-label="向下滚动"><Arrow dir="down" /></ScrollButton>
          </VScroll>
        </Workspace>
        <SheetBar>
          <SheetNav><Arrow dir="left" color="#b4b6b4" /><Arrow dir="right" color="#b4b6b4" /></SheetNav>
          <SheetTab>保本点的计算</SheetTab>
          <SheetTab>毛利计算</SheetTab>
          <SheetTab>Delta数据比较及IF的判断语句</SheetTab>
          <SheetTab $active>产品成本分析</SheetTab>
          <AddSheet aria-label="新工作表"><Svg w={16}><circle cx="8" cy="8" r="7" /><path d="M8 4.500v7M4.500 8h7" strokeWidth="1.500" /></Svg></AddSheet>
          <HScroll>
            <HGap><Separator /></HGap>
            <ScrollButton aria-label="向左滚动"><Arrow dir="left" /></ScrollButton>
            <HTrack><Thumb /></HTrack>
            <ScrollButton aria-label="向右滚动"><Arrow dir="right" /></ScrollButton>
          </HScroll>
        </SheetBar>
        <StatusBar>
          <StatusText>就绪</StatusText>
          <StatusRight>
            <ViewButton $on aria-label="普通"><Svg w={14}><path d="M.5.5h13v13H.5zM5 .5v13M9.500.5v13M.5 5h13M.5 9.500h13" /></Svg></ViewButton>
            <ViewButton aria-label="页面布局"><Svg w={14}><path d="M.5.5h13v13H.5zM3.500 2.500h7v9h-7zM5 5h4M5 7h4M5 9h4" /></Svg></ViewButton>
            <ViewButton aria-label="分页预览"><Svg w={14} h={13}><path d="M.5.5h13v12H.5zM4.500.5v7M9.500.5v7M.5 7.500h9" /></Svg></ViewButton>
            <Tool $w={16} aria-label="缩小"><Svg w={8}><path d="M1 4h6" strokeWidth="2" /></Svg></Tool>
            <ZoomSlider aria-label="缩放" min="0" max="100" defaultValue="58" />
            <Tool $w={10} aria-label="放大"><Svg w={8}><path d="M0 4h8M4 0v8" strokeWidth="2" /></Svg></Tool>
            <ZoomValue>145%</ZoomValue>
          </StatusRight>
        </StatusBar>
      </Frame>
      <Taskbar>
        <TaskIcon aria-label="开始菜单"><Svg w={17} stroke="none"><path d="M0 2.500l7-1V8H0zM8 1.300L17 0v8H8zM0 9h7v6.500l-7-1zM8 9h9v8l-9-1.300z" fill="#eee" /></Svg></TaskIcon>
        <TaskIcon $w={36} aria-label="Cortana"><Svg w={16} stroke="#eee" strokeWidth="2.500"><circle cx="8" cy="8" r="6.500" /></Svg></TaskIcon>
        <TaskIcon $w={39} aria-label="浏览器"><Svg w={16} stroke="none"><circle cx="8" cy="8" r="7.500" fill="#5b93cf" /><path d="M12 4.500Q8 2 5 5q0 2 3 3t3 3q-3 3-7 .5" stroke="#eef4fa" strokeWidth="2" /></Svg></TaskIcon>
        <TaskButton>
          <Svg w={15} stroke="none"><path d="M0 1l9-1v15l-9-1z" fill="#1f7145" /><path d="M2.500 4.500l4 6M6.500 4.500l-4 6" stroke="#fff" strokeWidth="1.300" /><path d="M10 2h4.500v11H10z" fill="#dfeee4" /><path d="M10 5h4.500M10 8h4.500M10 11h4.500M12 2v11" stroke="#1f7145" /></Svg>
          大家一起学Excel - Ex...
        </TaskButton>
        <Tray>
          <Ime>CH</Ime>
          <TrayItem aria-label="搜狗输入法"><Svg stroke="none"><path d="M1 2l13-1 1 12-13 2z" fill="#e2532f" /><path d="M12 4.500Q5 3 4.500 6q0 1.500 3.500 2t3 2.500q-2 2-6.500.5" stroke="#fff" strokeWidth="2" /></Svg></TrayItem>
          <TrayItem aria-label="显示隐藏的图标"><Svg w={14} h={8} stroke="#ddd" strokeWidth="1.300"><path d="M1 7l6-6 6 6" /></Svg></TrayItem>
          <TrayItem aria-label="录屏"><Svg stroke="none"><path d="M2 2h11v12H2zM0 5h16v6H0z" fill="#35b43a" /><circle cx="8" cy="8" r="3.500" fill="#d22" stroke="#222" /></Svg></TrayItem>
          <TrayItem aria-label="安全"><Svg stroke="none"><path d="M8 0q4 2 8 2 0 10-8 14Q0 12 0 2q4 0 8-2z" fill="#e8f0fa" /><path d="M8 2q3 1.500 6 1.500Q14 11 8 14 2 11 2 3.500 5 3.500 8 2z" fill="#3b82dc" /><path d="M4.500 6L8 9.500 11.500 6" stroke="#fff" strokeWidth="1.500" /></Svg></TrayItem>
          <TrayItem aria-label="微信"><Svg stroke="none"><ellipse cx="6" cy="6" rx="6" ry="5" fill="#58b85a" /><ellipse cx="11" cy="10.500" rx="5" ry="4" fill="#dfe8df" /></Svg></TrayItem>
          <TrayItem aria-label="QQ"><Svg stroke="none"><ellipse cx="7" cy="5" rx="4" ry="5" fill="#c8552c" /><circle cx="5.500" cy="3" r="1.500" fill="#fff" /><circle cx="8.500" cy="3" r="1.500" fill="#fff" /><path d="M1 9q6-3 12 0v6H2z" fill="#d8452c" /><circle cx="11" cy="11.500" r="4.500" fill="#eab13d" /><path d="M8.500 11h5M8.500 13h5" stroke="#80501c" /></Svg></TrayItem>
          <TrayItem aria-label="电池"><Svg stroke="#eee"><path d="M3.500 4.500h11v8h-11zM15.500 7v3M1.500 1v3M4.500 1v3M.5 4.500h5M3 5v3" /><path d="M6 6h7v5H6z" fill="#eee" stroke="none" /></Svg></TrayItem>
          <TrayItem aria-label="网络"><Svg stroke="#ddd"><path d="M2 14A12 12 0 0 1 14 2M5 14a9 9 0 0 1 9-9M8 14a6 6 0 0 1 6-6M11 14a3 3 0 0 1 3-3" strokeWidth="1.300" /></Svg></TrayItem>
          <TrayItem aria-label="音量"><Svg stroke="#ddd"><path d="M1.500 6H4l3.500-3.500v11L4 10H1.500zM9.500 6q1.500 2 0 4M11.500 4q3 4 0 8M13.500 2.500q4 5.500 0 11" /></Svg></TrayItem>
          <Clock>16 : 55</Clock>
          <TrayItem aria-label="操作中心"><Svg w={18} stroke="none"><path d="M1 1h16v13h-4l-3.500 3.500V14H1z" fill="#eee" /><path d="M4 4.500h10M4 7.500h10M4 10.500h6" stroke="#14130f" /></Svg></TrayItem>
        </Tray>
      </Taskbar>
    </Window>
  );
}
